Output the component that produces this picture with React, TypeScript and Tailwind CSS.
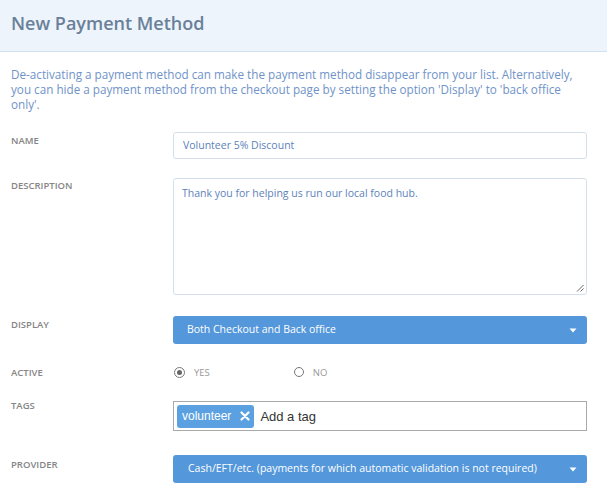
import React from "react";

const labelCls =
  "w-[162px] shrink-0 text-[9.5px] leading-[12px] font-semibold uppercase text-[#858585]";

function Caret() {
  return (
    <svg width="8" height="5" viewBox="0 0 8 5" className="shrink-0">
      <path d="M0.5 0.5 L7.5 0.5 L4 4.5 Z" fill="#ffffff" />
    </svg>
  );
}

export default function App() {
  return (
    <div
      className="w-[607px] h-[493px] bg-white overflow-hidden"
      style={{ fontFamily: '"Open Sans", "Noto Sans", sans-serif' }}
    >
      <div className="h-[52px] bg-[#edf4fc] border-b border-[#d3e1ee] flex items-center px-[11px]">
        <h1 className="text-[18px] font-semibold text-[#6a8099] leading-none -mt-[6px]">
          New Payment Method
        </h1>
      </div>

      <div className="pl-[11px] pr-[20px]">
        <p className="mt-[15px] text-[11.7px] leading-[15px] text-[#6f93c9]">
          De-activating a payment method can make the payment method disappear from your list. Alternatively,
          you can hide a payment method from the checkout page by setting the option 'Display' to 'back office
          only'.
        </p>

        {/* Name */}
        <div className="flex mt-[20px]">
          <div className={labelCls + " pt-[3px]"}>Name</div>
          <div className="flex-1 h-[27px] border border-[#d3dfea] rounded-[3px] flex items-center px-[9px] text-[10.5px] text-[#5d82bb]">
            Volunteer 5% Discount
          </div>
        </div>

        {/* Description */}
        <div className="flex mt-[19px]">
          <div className={labelCls + " pt-[2px]"}>Description</div>
          <div className="relative flex-1 h-[117px] border border-[#d3dfea] rounded-[3px] px-[8px] pt-[7px] text-[10.5px] leading-[15px] text-[#5d82bb]">
            Thank you for helping us run our local food hub.
            <svg
              width="8"
              height="8"
              viewBox="0 0 8 8"
              className="absolute right-[2px] bottom-[2px]"
            >
              <path d="M7.5 1 L1 7.5 M7.5 4.5 L4.5 7.5" stroke="#555" strokeWidth="0.9" />
            </svg>
          </div>
        </div>

        {/* Display */}
        <div className="flex mt-[21px]">
          <div className={labelCls + " pt-[3px]"}>Display</div>
          <div className="flex-1 h-[28px] bg-[#5497db] rounded-[3px] flex items-center justify-between pl-[14px] pr-[10px] text-[10.5px] text-white">
            <span>Both Checkout and Back office</span>
            <Caret />
          </div>
        </div>

        {/* Active */}
        <div className="flex mt-[20px] items-center">
          <div className={labelCls + " pt-[2px]"}>Active</div>
          <div className="flex items-center">
            <span className="w-[11px] h-[11px] rounded-full border border-[#777] flex items-center justify-center ml-[1px]">
              <span className="w-[5px] h-[5px] rounded-full bg-[#666]" />
            </span>
            <span className="ml-[9px] text-[9.5px] uppercase text-[#999] pt-[2px]">Yes</span>
            <span className="w-[10px] h-[10px] rounded-full border border-[#777] ml-[84px]" />
            <span className="ml-[9px] text-[9.5px] uppercase text-[#999] pt-[2px]">No</span>
          </div>
        </div>

        {/* Tags */}
        <div className="flex mt-[21px]">
          <div className={labelCls + " -mt-[1px]"}>Tags</div>
          <div className="flex-1 h-[30px] border border-[#a9a9a9] flex items-center px-[3px]">
            <span
              className="h-[23px] bg-[#5ba1e1] rounded-[3px] flex items-center pl-[5px] pr-[4px] text-white text-[12px]"
              style={{ fontFamily: '"Liberation Sans", Arial, sans-serif' }}
            >
              volunteer
              <svg width="10" height="10" viewBox="0 0 10 10" className="ml-[9px]">
                <path d="M1.5 1.5 L8.5 8.5 M8.5 1.5 L1.5 8.5" stroke="#fff" strokeWidth="2.2" strokeLinecap="round" />
              </svg>
            </span>
            <span
              className="ml-[6px] text-[13px] text-[#333]"
              style={{ fontFamily: '"Liberation Sans", Arial, sans-serif' }}
            >
              Add a tag
            </span>
          </div>
        </div>

        {/* Provider */}
        <div className="flex mt-[24px]">
          <div className={labelCls + " pt-[4px]"}>Provider</div>
          <div className="flex-1 h-[28px] bg-[#5497db] rounded-[3px] flex items-center justify-between pl-[15px] pr-[10px] text-[10.5px] text-white">
            <span>Cash/EFT/etc. (payments for which automatic validation is not required)</span>
            <Caret />
          </div>
        </div>
      </div>
    </div>
  );
}
